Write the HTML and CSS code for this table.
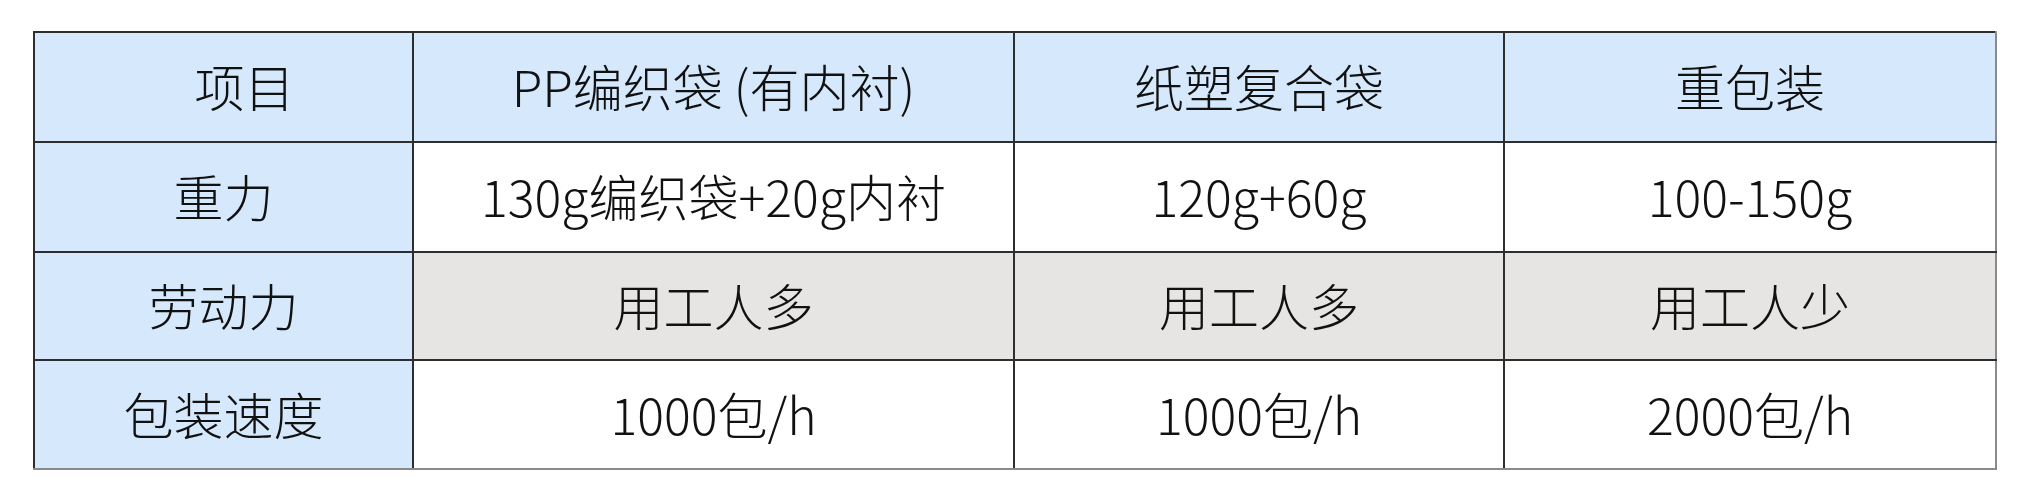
FILE: index.html
```html
<!DOCTYPE html>
<html lang="zh">
<head>
<meta charset="utf-8">
<link rel="stylesheet" href="styles.css">
</head>
<body>
<div class="wrap">
<table class="cmp">
  <colgroup>
    <col class="c1"><col class="c2"><col class="c3"><col class="c4">
  </colgroup>
  <tr class="r1">
    <td class="head first">项目</td>
    <td class="head">PP编织袋 (有内衬)</td>
    <td class="head">纸塑复合袋</td>
    <td class="head">重包装</td>
  </tr>
  <tr class="r2">
    <td class="head">重力</td>
    <td>130g编织袋+20g内衬</td>
    <td>120g+60g</td>
    <td>100-150g</td>
  </tr>
  <tr class="r3">
    <td class="head">劳动力</td>
    <td class="grey">用工人多</td>
    <td class="grey">用工人多</td>
    <td class="grey">用工人少</td>
  </tr>
  <tr class="r4">
    <td class="head">包装速度</td>
    <td>1000包/h</td>
    <td>1000包/h</td>
    <td>2000包/h</td>
  </tr>
</table>
</div>
</body>
</html>
```
FILE: styles.css
```css
html, body {
  margin: 0;
  padding: 0;
  background: #ffffff;
}
.wrap {
  padding: 31px 0 0 33px;
}
.cmp {
  border-collapse: collapse;
  table-layout: fixed;
  width: 1962px;
  font-family: "Noto Sans CJK SC Light", "Noto Sans CJK SC", "Noto Sans", sans-serif;
  font-weight: 300;
  font-size: 50px;
  color: #111111;
}
.c1 { width: 379px; }
.c2 { width: 601px; }
.c3 { width: 490px; }
.c4 { width: 492px; }
.cmp td {
  border: 2px solid #2e2e2e;
  text-align: center;
  vertical-align: middle;
  padding: 0 0 4px 0;
  background: #ffffff;
  line-height: 1;
}
.cmp td:last-child {
  border-right-color: #8a8a8a;
}
.cmp tr:last-child td {
  border-bottom-color: #8a8a8a;
}
.cmp td.head {
  background: #d5e8fc;
}
.cmp td.first {
  padding-left: 42px;
}
.cmp td.grey {
  background: #e7e5e4;
}
.r1 td { height: 104px; }
.r2 td { height: 104px; }
.r3 td { height: 102px; }
.r4 td { height: 103px; }
```
